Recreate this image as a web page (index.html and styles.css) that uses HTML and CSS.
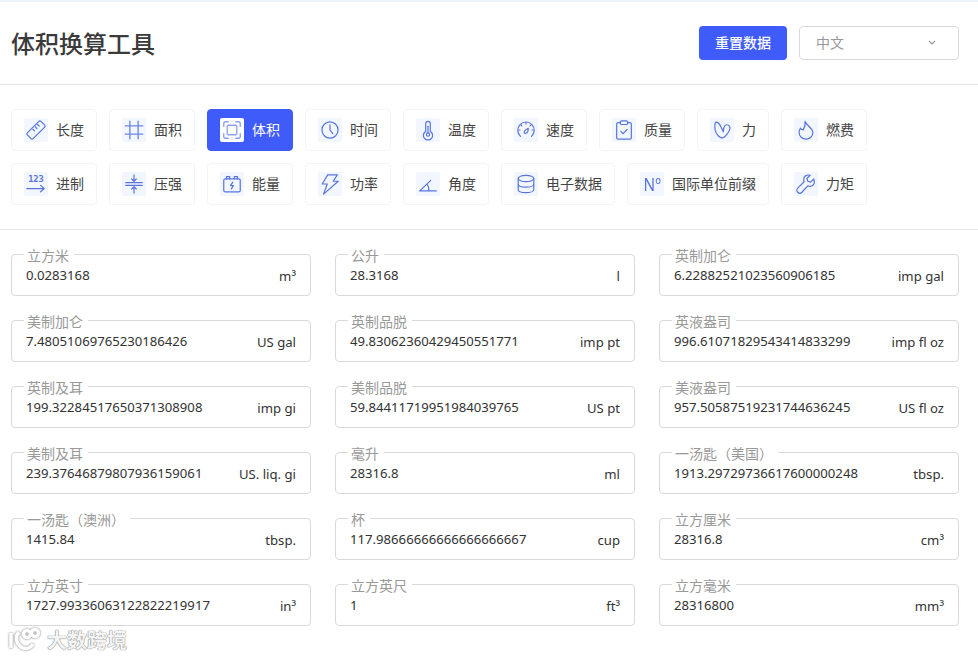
FILE: index.html
```html
<!DOCTYPE html>
<html lang="zh">
<head>
<meta charset="utf-8">
<title>体积换算工具</title>
<link rel="stylesheet" href="styles.css">
</head>
<body>
<header class="header">
  <h1 class="title">体积换算工具</h1>
  <div class="actions">
    <button class="reset">重置数据</button>
    <div class="select"><span>中文</span>
      <svg class="chev" viewBox="0 0 8 5" width="8" height="5"><path d="M1 1l3 3 3-3"/></svg>
    </div>
  </div>
</header>
<nav class="tabs">
  <a class="tab"><span class="ibox"><svg class="ico" viewBox="0 0 24 24"><rect x="1.500" y="7.500" width="21" height="9" rx="1.600" transform="rotate(-45 12 12)"/><path d="M8.600 11.200l1.800 1.800M11.200 8.600l1.800 1.800M13.800 6l1.800 1.800"/></svg></span>长度</a>
  <a class="tab"><span class="ibox"><svg class="ico ico-b" viewBox="0 0 24 24"><path d="M7.500 2.500v19M16.500 2.500v19M2.500 7.500h19M2.500 16.500h19"/></svg></span>面积</a>
  <a class="tab active"><span class="ibox"><svg class="ico ico-b" viewBox="0 0 24 24"><path d="M3 8V5a2 2 0 0 1 2-2h3M16 3h3a2 2 0 0 1 2 2v3M21 16v3a2 2 0 0 1-2 2h-3M8 21H5a2 2 0 0 1-2-2v-3"/><rect x="6.800" y="6.800" width="10.400" height="10.400" rx="1"/></svg></span>体积</a>
  <a class="tab"><span class="ibox"><svg class="ico" viewBox="0 0 24 24"><circle cx="12" cy="12" r="8.800"/><path d="M12 6.500V12l3 4"/></svg></span>时间</a>
  <a class="tab"><span class="ibox"><svg class="ico" viewBox="0 0 24 24"><path d="M9.500 13.500V5a2.500 2.500 0 0 1 5 0v8.500a5 5 0 1 1-5 0z"/><circle cx="12" cy="17" r="1.800"/><path d="M12 15V8"/></svg></span>温度</a>
  <a class="tab"><span class="ibox"><svg class="ico" viewBox="0 0 24 24"><path d="M6 19a9 9 0 1 1 12 0"/><path d="M10 14.500c0-1.500 2.500-3.500 4.500-4.500 0 2-1 5-2.500 5.500-1 .3-2-.1-2-1z"/><path d="M4 12h1.500M18.500 12H20M12 4v1.500M6.500 6.500l1 1M17.500 6.500l-1 1"/></svg></span>速度</a>
  <a class="tab"><span class="ibox"><svg class="ico" viewBox="0 0 24 24"><path d="M8 4H5.500A1.500 1.500 0 0 0 4 5.500v15A1.500 1.500 0 0 0 5.500 22h13a1.500 1.500 0 0 0 1.500-1.500v-15A1.500 1.500 0 0 0 18.500 4H16"/><rect x="8" y="2" width="8" height="4" rx="1.500"/><path d="M8.500 13.500l2.500 2.500 4.500-4.500"/></svg></span>质量</a>
  <a class="tab"><span class="ibox"><svg class="ico" viewBox="0 0 24 24"><path d="M5 3.500C8 3.500 10 6.500 11 9l2.500 5C13 10 15 6.500 17 6.300c2.500-.3 4.500 2.500 3.500 5C19 15 15.500 20 13 20.500 9.500 21 5.500 17 4.500 12 4 8.500 4 5 5 3.500z"/></svg></span>力</a>
  <a class="tab"><span class="ibox"><svg class="ico" viewBox="0 0 24 24"><path d="M11 2.500C12 6.500 19.500 10 19.500 15a7.500 7 0 0 1-15 0c0-2 .5-3.500 1.500-5 .5 1 1.500 1.500 3 2C10.500 9 11.500 6 11 2.500z"/></svg></span>燃费</a>
  <a class="tab"><span class="ibox"><svg class="ico" viewBox="0 0 24 24"><text class="ico-text" x="12" y="9.500">123</text><path d="M2 17h19M17 13.500l4 3.500-4 3.500"/></svg></span>进制</a>
  <a class="tab"><span class="ibox"><svg class="ico" viewBox="0 0 24 24"><path d="M3 10.500h18M3 13.500h18M12 2v7M9.500 6.500l2.500 2.500 2.500-2.500M12 22v-7M9.500 17.500l2.500-2.500 2.500 2.500"/></svg></span>压强</a>
  <a class="tab"><span class="ibox"><svg class="ico" viewBox="0 0 24 24"><rect x="3" y="6.500" width="18" height="14" rx="1.500"/><path d="M6 6.500V4h3.500v2.500M14.500 6.500V4H18v2.500M12.800 10l-2.300 3.800h3l-2.300 3.700"/></svg></span>能量</a>
  <a class="tab"><span class="ibox"><svg class="ico" viewBox="0 0 24 24"><path d="M9.500 2H20l-4.500 7H21L5 23l4-11H3.500z"/></svg></span>功率</a>
  <a class="tab"><span class="ibox"><svg class="ico" viewBox="0 0 24 24"><path d="M21 19.500H3L15 8M11 12c1.500 2 2 4 2 7.500"/></svg></span>角度</a>
  <a class="tab"><span class="ibox"><svg class="ico" viewBox="0 0 24 24"><ellipse cx="12" cy="6" rx="8.500" ry="3.500"/><path d="M3.500 6v12c0 2 3.800 3.500 8.500 3.500s8.500-1.500 8.500-3.500V6M3.500 12c0 2 3.800 3.500 8.500 3.500s8.500-1.500 8.500-3.500"/></svg></span>电子数据</a>
  <a class="tab"><span class="ibox ibox-no"><span class="no">Nº</span></span>国际单位前缀</a>
  <a class="tab"><span class="ibox"><svg class="ico" viewBox="0 0 24 24"><path d="M20.500 6.500l-3.500 3.500-3-1-1-3 3.500-3.500c-3-1-7 .5-7 4.500 0 1 .2 2 .5 2.500L3 16.500c-1.500 1.500-1 3.500 0 4.500s3 1.500 4.500 0l6.500-7c.5.3 1.500.5 2.500.5 4 0 5.500-4.500 4-7.500z"/></svg></span>力矩</a>
</nav>
<main class="fields">
  <div class="field"><label class="lbl">立方米</label><span class="val">0.0283168</span><span class="unit">m³</span></div>
  <div class="field"><label class="lbl">公升</label><span class="val">28.3168</span><span class="unit">l</span></div>
  <div class="field"><label class="lbl">英制加仑</label><span class="val">6.22882521023560906185</span><span class="unit">imp gal</span></div>
  <div class="field"><label class="lbl">美制加仑</label><span class="val">7.48051069765230186426</span><span class="unit">US gal</span></div>
  <div class="field"><label class="lbl">英制品脱</label><span class="val">49.83062360429450551771</span><span class="unit">imp pt</span></div>
  <div class="field"><label class="lbl">英液盎司</label><span class="val">996.61071829543414833299</span><span class="unit">imp fl oz</span></div>
  <div class="field"><label class="lbl">英制及耳</label><span class="val">199.32284517650371308908</span><span class="unit">imp gi</span></div>
  <div class="field"><label class="lbl">美制品脱</label><span class="val">59.84411719951984039765</span><span class="unit">US pt</span></div>
  <div class="field"><label class="lbl">美液盎司</label><span class="val">957.50587519231744636245</span><span class="unit">US fl oz</span></div>
  <div class="field"><label class="lbl">美制及耳</label><span class="val">239.37646879807936159061</span><span class="unit">US. liq. gi</span></div>
  <div class="field"><label class="lbl">毫升</label><span class="val">28316.8</span><span class="unit">ml</span></div>
  <div class="field"><label class="lbl">一汤匙（美国）</label><span class="val">1913.29729736617600000248</span><span class="unit">tbsp.</span></div>
  <div class="field"><label class="lbl">一汤匙（澳洲）</label><span class="val">1415.84</span><span class="unit">tbsp.</span></div>
  <div class="field"><label class="lbl">杯</label><span class="val">117.98666666666666666667</span><span class="unit">cup</span></div>
  <div class="field"><label class="lbl">立方厘米</label><span class="val">28316.8</span><span class="unit">cm³</span></div>
  <div class="field"><label class="lbl">立方英寸</label><span class="val">1727.99336063122822219917</span><span class="unit">in³</span></div>
  <div class="field"><label class="lbl">立方英尺</label><span class="val">1</span><span class="unit">ft³</span></div>
  <div class="field"><label class="lbl">立方毫米</label><span class="val">28316800</span><span class="unit">mm³</span></div>
</main>
<div class="mark">
  <svg class="mark-logo" viewBox="0 0 36 24" width="36" height="24"><path d="M3 5v15M11 4c-4 4-3 12 2 15s10 1 12-3"/><circle cx="19" cy="6" r="3.500"/><circle cx="27" cy="5" r="3.500"/></svg>
  <span class="mark-text">大数跨境</span>
</div>
</body>
</html>
```
FILE: styles.css
```css
* { box-sizing: border-box; }
html, body { margin: 0; padding: 0; }
body {
  width: 978px;
  height: 659px;
  overflow: hidden;
  background: #fff;
  color: #333;
  font-family: "Noto Sans", "Noto Sans CJK SC", sans-serif;
  position: relative;
}
.header {
  height: 85px;
  border-top: 2px solid #edf3fb;
  border-bottom: 1px solid #e6e6e6;
  padding: 0 19px 0 11px;
  display: flex;
  align-items: center;
  justify-content: space-between;
}
.title {
  margin: 0;
  font-size: 24px;
  font-weight: 500;
  line-height: 32px;
  color: #3a3a3a;
  font-family: "Noto Sans CJK SC", sans-serif;
}
.actions { display: flex; gap: 12px; }
.reset {
  width: 88px;
  height: 34px;
  border: 0;
  border-radius: 4px;
  background: #3f5cfb;
  color: #fff;
  font: 500 14px "Noto Sans CJK SC", sans-serif;
  padding: 0 0 2px;
}
.select {
  width: 160px;
  height: 34px;
  border: 1px solid #d9d9d9;
  border-radius: 4px;
  padding: 0 22px 2px 16px;
  display: flex;
  align-items: center;
  justify-content: space-between;
  color: #999;
  font: 14px "Noto Sans CJK SC", sans-serif;
}
.chev { fill: none; stroke: #999; stroke-width: 1.2; }
.tabs {
  display: flex;
  flex-wrap: wrap;
  gap: 12px;
  padding: 24px 100px 24px 11px;
  border-bottom: 1px solid #e6e6e6;
  height: 145px;
  align-content: flex-start;
}
.tab {
  height: 42px;
  display: flex;
  align-items: center;
  gap: 8px;
  padding: 0 12px 2px;
  border: 1px solid #f4f4f6;
  border-radius: 4px;
  font: 14px "Noto Sans CJK SC", sans-serif;
  color: #444;
  background: #fff;
}
.tab.active { background: #3f5cfb; border-color: #3f5cfb; color: #fff; }
.ibox {
  width: 24px;
  height: 24px;
  margin-bottom: -2px;
  background: #f2f6fe;
  border-radius: 2px;
  display: flex;
}
.ibox-no { align-items: center; justify-content: center; }
.no {
  font: 18px/24px "Noto Sans", sans-serif;
  color: #5874dc;
  transform: scaleX(.85);
  white-space: nowrap;
}
.active .ibox { background: #fff; }
.ico {
  width: 24px;
  height: 24px;
  padding: 1px;
  fill: none;
  stroke: #5874dc;
  stroke-width: 1.3;
  stroke-linecap: round;
  stroke-linejoin: round;
}
.ico-b { stroke-width: 1.5; stroke: #6f88e2; }
.active .ico { stroke: #8ea3ee; }
.ico text { stroke: none; fill: #5874dc; }
.ico-text { font: 700 9.5px "DejaVu Sans Mono", monospace; text-anchor: middle; }
.fields {
  display: grid;
  grid-template-columns: repeat(3, 300px);
  gap: 24px;
  padding: 24px 0 0 11px;
}
.field {
  position: relative;
  height: 42px;
  border: 1px solid #d9d9d9;
  border-radius: 4px;
  padding: 0 14px;
  display: flex;
  justify-content: space-between;
  align-items: center;
  font-size: 13.15px;
  color: #333;
}
.lbl {
  position: absolute;
  left: 12px;
  top: -9px;
  padding: 0 5px 0 3px;
  background: #fff;
  font: 14px/18px "Noto Sans CJK SC", sans-serif;
  color: #999;
}
.val { white-space: nowrap; }
.unit { position: relative; top: 1px; white-space: nowrap; }
.mark {
  position: absolute;
  left: 8px;
  top: 628px;
  display: flex;
  align-items: center;
  gap: 3px;
}
.mark-logo { fill: none; stroke: #fff; stroke-width: 3.5; filter: drop-shadow(0 0 1px #777); }
.mark-text {
  font: 700 20px/24px "Noto Sans CJK SC", sans-serif;
  color: #f4f4f4;
  text-shadow: 0 0 1px #777, 0 0 1px #777;
}
```
